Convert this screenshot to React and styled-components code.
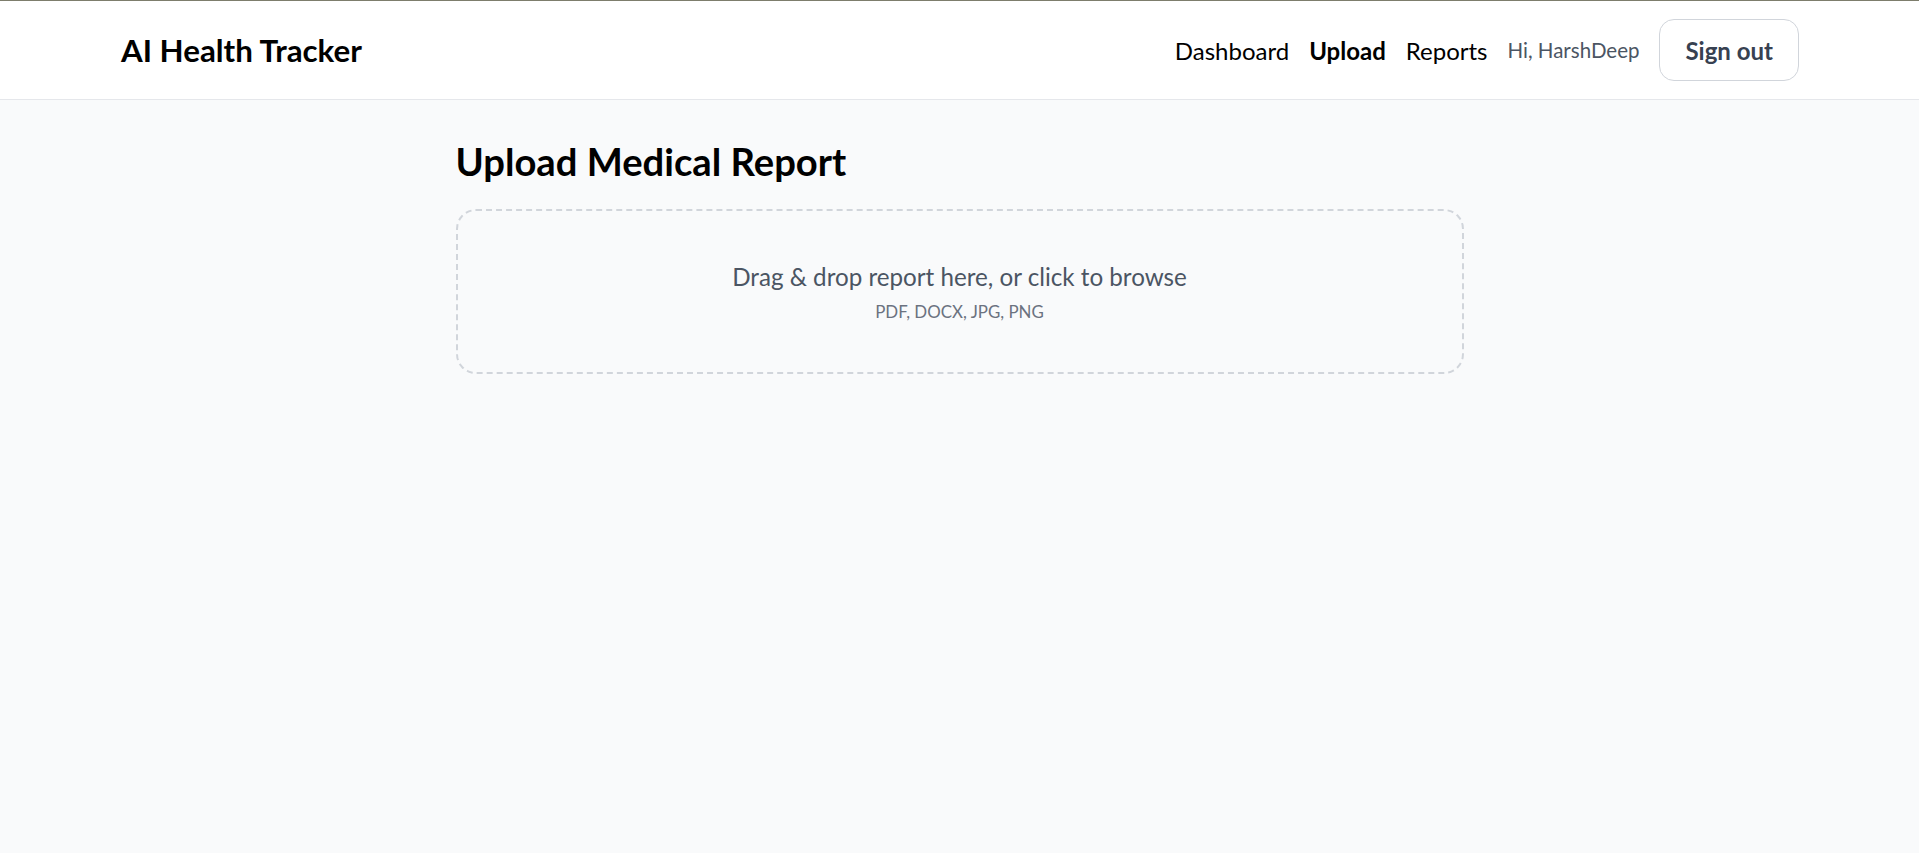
import React from 'react';
import styled, { createGlobalStyle } from 'styled-components';

const GlobalStyle = createGlobalStyle`
  html, body {
    margin: 0;
    padding: 0;
  }
  body {
    font-family: Lato, "Liberation Sans", sans-serif;
    background: #f9fafb;
    color: #000;
  }
`;

const Page = styled.div`
  min-height: 100vh;
`;

const Header = styled.header`
  background: #fff;
  border-top: 1px solid #7d7d6c;
  border-bottom: 1px solid #e5e7eb;
`;

const HeaderInner = styled.div`
  height: 98px;
  padding: 0 120px 0 121px;
  display: flex;
  align-items: center;
  justify-content: space-between;
`;

const Logo = styled.div`
  font-size: 31.3px;
  font-weight: 700;
  line-height: 36px;
  color: #000;
`;

const Nav = styled.nav`
  display: flex;
  align-items: center;
  gap: 20px;
`;

const NavLink = styled.a`
  font-size: 24px;
  line-height: 35px;
  color: #000;
  text-decoration: none;
  font-weight: ${({ $active }) => ($active ? 700 : 400)};
  cursor: pointer;
`;

const Greeting = styled.span`
  font-size: 20.5px;
  line-height: 30px;
  color: #4b5563;
`;

const SignOut = styled.button`
  font-family: inherit;
  font-size: 24px;
  line-height: 35px;
  font-weight: 700;
  color: #374151;
  background: #fff;
  border: 1px solid #d1d5db;
  border-radius: 15px;
  padding: 12.5px 25px;
  cursor: pointer;
`;

const Main = styled.main`
  padding: 39px 0;
`;

const Container = styled.div`
  width: 1008px;
  margin: 0 auto;
`;

const Title = styled.h1`
  margin: 0 0 25px;
  font-size: 38.2px;
  line-height: 45px;
  font-weight: 700;
  color: #000;
`;

const DropZone = styled.label`
  display: block;
  border: 2px dashed #d1d5db;
  border-radius: 20px;
  padding: 48px;
  text-align: center;
  cursor: pointer;
`;

const HiddenInput = styled.input`
  display: none;
`;

const DropText = styled.p`
  margin: 0;
  font-size: 24.2px;
  line-height: 35px;
  color: #4b5563;
`;

const DropHint = styled.p`
  margin: 5px 0 0;
  font-size: 16.9px;
  line-height: 25px;
  color: #6b7280;
`;

export default function App() {
  return (
    <Page>
      <GlobalStyle />
      <Header>
        <HeaderInner>
          <Logo>AI Health Tracker</Logo>
          <Nav>
            <NavLink>Dashboard</NavLink>
            <NavLink $active>Upload</NavLink>
            <NavLink>Reports</NavLink>
            <Greeting>Hi, HarshDeep</Greeting>
            <SignOut>Sign out</SignOut>
          </Nav>
        </HeaderInner>
      </Header>
      <Main>
        <Container>
          <Title>Upload Medical Report</Title>
          <DropZone>
            <HiddenInput type="file" accept=".pdf,.docx,.jpg,.jpeg,.png" />
            <DropText>Drag &amp; drop report here, or click to browse</DropText>
            <DropHint>PDF, DOCX, JPG, PNG</DropHint>
          </DropZone>
        </Container>
      </Main>
    </Page>
  );
}
